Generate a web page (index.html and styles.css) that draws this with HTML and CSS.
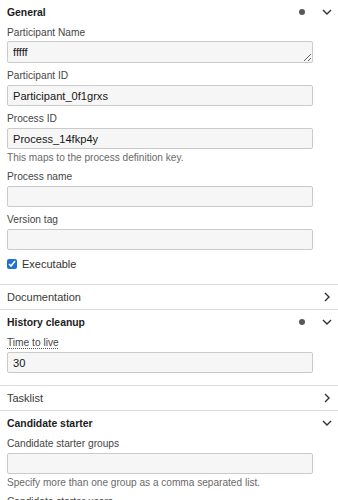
FILE: index.html
```html
<!DOCTYPE html>
<html>

<head>
  <title>Properties panel</title>
  <link rel="stylesheet" href="styles.css">
</head>

<body>
  <div class="panel">
    <!-- General group -->
    <div class="group open">
      <div class="group-header">
        <span class="group-title">General</span>
        <span class="data-marker"></span>
        <span class="arrow">
          <svg width="14" height="14" viewBox="0 0 14 14"><path d="M3 5 L7 9 L11 5" /></svg>
        </span>
      </div>
      <div class="group-entries">
        <div class="entry entry-textarea">
          <label class="entry-label" for="participantName">Participant Name</label>
          <textarea class="field" id="participantName" rows="1">fffff</textarea>
        </div>
        <div class="entry">
          <label class="entry-label" for="participantId">Participant ID</label>
          <input class="field" type="text" id="participantId" value="Participant_0f1grxs" />
        </div>
        <div class="entry has-description">
          <label class="entry-label" for="processId">Process ID</label>
          <input class="field" type="text" id="processId" value="Process_14fkp4y" />
          <div class="entry-description">This maps to the process definition key.</div>
        </div>
        <div class="entry">
          <label class="entry-label" for="processName">Process name</label>
          <input class="field" type="text" id="processName" />
        </div>
        <div class="entry">
          <label class="entry-label" for="versionTag">Version tag</label>
          <input class="field" type="text" id="versionTag" />
        </div>
        <div class="entry entry-checkbox">
          <input type="checkbox" id="executable" checked />
          <label for="executable">Executable</label>
        </div>
      </div>
    </div>

    <!-- Documentation group -->
    <div class="group">
      <div class="group-header">
        <span class="group-title">Documentation</span>
        <span class="arrow">
          <svg width="14" height="14" viewBox="0 0 14 14"><path d="M5 3 L9 7 L5 11" /></svg>
        </span>
      </div>
    </div>

    <!-- History cleanup group -->
    <div class="group open">
      <div class="group-header">
        <span class="group-title">History cleanup</span>
        <span class="data-marker"></span>
        <span class="arrow">
          <svg width="14" height="14" viewBox="0 0 14 14"><path d="M3 5 L7 9 L11 5" /></svg>
        </span>
      </div>
      <div class="group-entries">
        <div class="entry">
          <label class="entry-label" for="timeToLive"><span class="tooltip-label">Time to live</span></label>
          <input class="field" type="text" id="timeToLive" value="30" />
        </div>
      </div>
    </div>

    <!-- Tasklist group -->
    <div class="group">
      <div class="group-header">
        <span class="group-title">Tasklist</span>
        <span class="arrow">
          <svg width="14" height="14" viewBox="0 0 14 14"><path d="M5 3 L9 7 L5 11" /></svg>
        </span>
      </div>
    </div>

    <!-- Candidate starter group -->
    <div class="group open">
      <div class="group-header">
        <span class="group-title">Candidate starter</span>
        <span class="arrow">
          <svg width="14" height="14" viewBox="0 0 14 14"><path d="M3 5 L7 9 L11 5" /></svg>
        </span>
      </div>
      <div class="group-entries">
        <div class="entry has-description">
          <label class="entry-label" for="starterGroups">Candidate starter groups</label>
          <input class="field" type="text" id="starterGroups" />
          <div class="entry-description">Specify more than one group as a comma separated list.</div>
        </div>
        <div class="entry">
          <label class="entry-label" for="starterUsers">Candidate starter users</label>
          <input class="field" type="text" id="starterUsers" />
        </div>
      </div>
    </div>
  </div>
</body>

</html>
```

FILE: styles.css
```css
body {
  margin: 0;
  padding: 0;
  font-family: "Liberation Sans", Arial, sans-serif;
  background-color: #fff;
  color: #222;
}

.panel {
  width: 338px;
}

.group {
  border-bottom: 1px solid #dcdcdc;
}

.group-header {
  display: flex;
  align-items: center;
  height: 24px;
  padding: 0 4px 0 7px;
  font-size: 11px;
  color: #3a3a3a;
}

.group-title {
  flex: 1;
}

.group.open .group-title {
  font-weight: bold;
  font-size: 10.4px;
  color: #1c1c1c;
}

.data-marker {
  width: 6px;
  height: 6px;
  border-radius: 50%;
  background-color: #55575c;
  margin-right: 15px;
}

.arrow {
  display: flex;
  width: 14px;
  height: 14px;
}

.arrow path {
  fill: none;
  stroke: #333;
  stroke-width: 1.4;
}

.group-entries {
  padding: 2px 25px 6px 7px;
}

.entry {
  margin-bottom: 6px;
}

.entry.has-description {
  margin-bottom: 5px;
}

.entry-label {
  display: block;
  font-size: 10.2px;
  line-height: 14px;
  color: #464646;
  margin-bottom: 2px;
}

.entry-textarea .entry-label {
  margin-bottom: 1px;
}

.tooltip-label {
  text-decoration: underline dotted #555;
  text-underline-offset: 2px;
}

.field {
  display: block;
  box-sizing: border-box;
  width: 100%;
  height: 21px;
  margin: 0;
  padding: 0 5px;
  border: 1px solid #cacaca;
  border-radius: 2px;
  background-color: #f6f6f7;
  font-family: inherit;
  font-size: 11.1px;
  color: #161616;
  outline: none;
}

textarea.field {
  height: 22px;
  padding: 3px 5px;
  line-height: 14px;
  resize: vertical;
  overflow: hidden;
}

.entry-description {
  margin-top: 2px;
  font-size: 10.1px;
  line-height: 14px;
  color: #6a6a6a;
}

.entry-checkbox {
  display: flex;
  align-items: center;
  gap: 5px;
  height: 16px;
  font-size: 11px;
  color: #333;
}

.entry-checkbox input {
  width: 10px;
  height: 10px;
  margin: 0;
  accent-color: #1f6fd6;
}
```
